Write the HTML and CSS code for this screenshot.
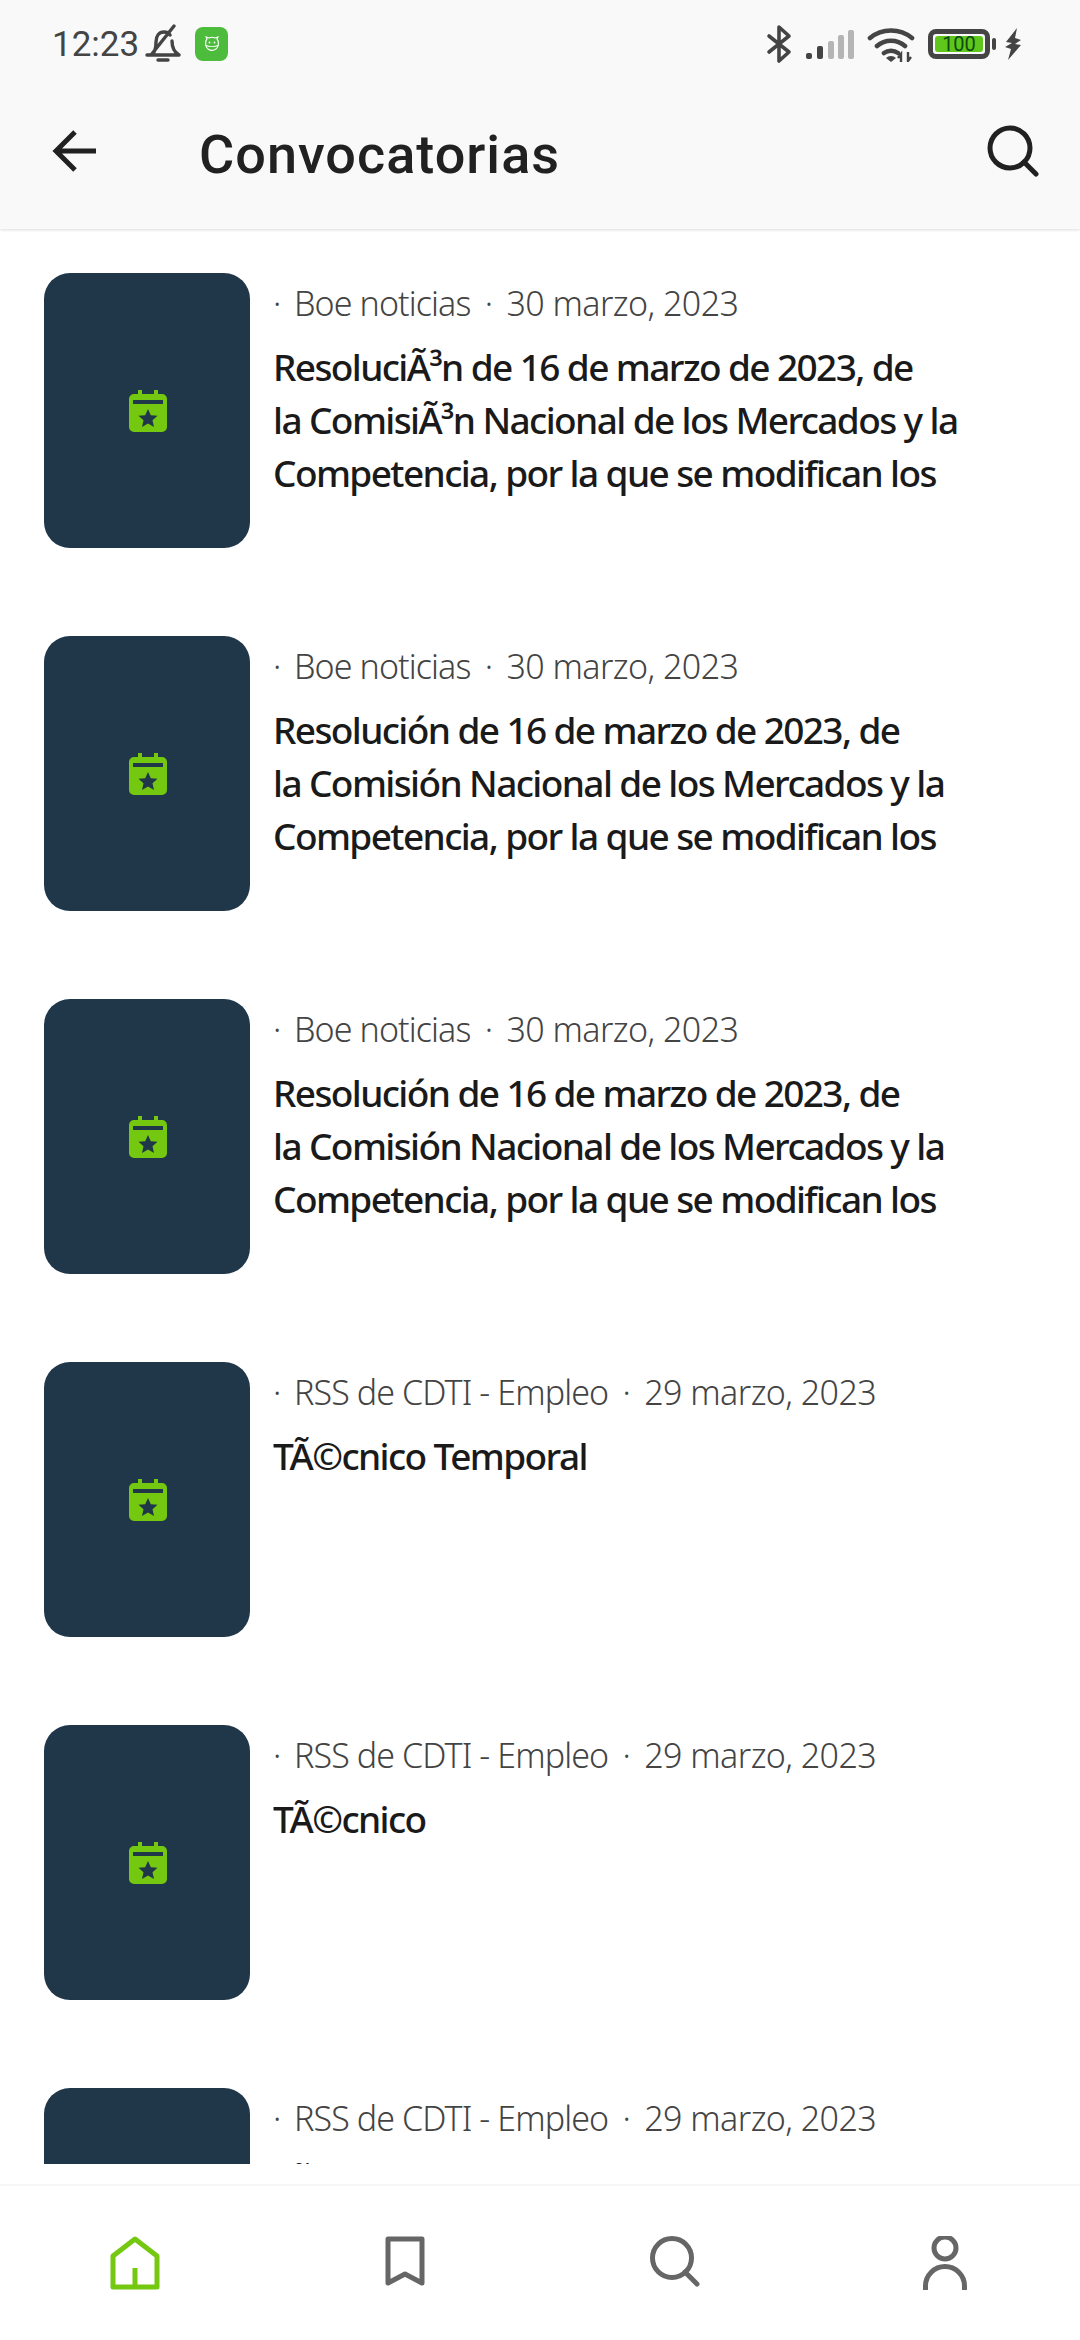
FILE: index.html
```html
<!DOCTYPE html>
<html lang="es">
<head>
<meta charset="utf-8">
<title>Convocatorias</title>
<link rel="stylesheet" href="styles.css">
</head>
<body>
<div class="app">
  <header class="top">
    <div class="status">
      <div class="status-left">
        <span class="time">12:23</span>
        <svg class="bell" viewBox="0 0 36 40" width="36" height="40"><path d="M2 31h32M7 31c3-3 4-7 4-13 0-6 3-10 8-10 3 0 5 1 6 3M27 17c0 6 2 11 7 14M13 36h10M6 31 29 2" fill="none" stroke="#444" stroke-width="3.4" stroke-linecap="round" stroke-linejoin="round"/></svg>
        <span class="appicon"><svg viewBox="0 0 20 20" width="20" height="20"><path d="M5 5 4 3l3 1a7 7 0 0 1 6 0l3-1-1 2c2 2 2 8-1 10a7 7 0 0 1-8 0C3 13 3 7 5 5zM3 11c4 2 10 2 14 0" fill="none" stroke="#fff" stroke-width="1.1"/><circle cx="7.5" cy="8.5" r=".9" fill="#fff"/><circle cx="12.5" cy="8.5" r=".9" fill="#fff"/></svg></span>
      </div>
      <div class="status-right">
        <svg viewBox="0 0 26 40" width="26" height="40"><path d="M3 12l20 16-10 9V3l10 9L3 28" fill="none" stroke="#444" stroke-width="3.6" stroke-linejoin="round" stroke-linecap="round"/></svg>
        <svg class="signal" viewBox="0 0 50 32" width="50" height="32"><g><rect x="2" y="25" width="6" height="6" rx="2" fill="#444"/><rect x="13" y="18" width="6" height="13" rx="2" fill="#444"/><rect x="24" y="13" width="6" height="18" rx="2" fill="#b5b5b5"/><rect x="34" y="7" width="6" height="24" rx="2" fill="#b5b5b5"/><rect x="44" y="2" width="6" height="29" rx="2" fill="#b5b5b5"/></g></svg>
        <svg class="wifi" viewBox="0 0 48 36" width="48" height="36"><g fill="none" stroke="#444" stroke-width="4.6" stroke-linecap="round"><path d="M3 12c12-10 30-10 42 0M10 20c8-7 20-7 28 0M17 27c4-3 10-3 14 0"/></g><path d="M24 36l-5-4a7 7 0 0 1 10 0z" fill="#444"/><path d="M34 36v-8l-3 4M41 26v9l3-4" fill="none" stroke="#444" stroke-width="2.4"/></svg>
        <span class="battery"><span class="battery-body"><span class="battery-fill">100</span></span><span class="battery-tip"></span></span>
        <svg class="bolt" viewBox="0 0 18 32" width="18" height="32"><path d="M13 0 2 14l6 1-7 4 6 2-3 11 13-15-6-1 6-4-6-2z" fill="#444"/></svg>
      </div>
    </div>
    <div class="bar">
      <svg class="back" viewBox="0 0 44 44" width="44" height="44"><path d="M44 22H4M23 3 4 22l19 19" fill="none" stroke="#212121" stroke-width="5"/></svg>
      <h1 class="title">Convocatorias</h1>
      <svg class="search" viewBox="0 0 52 52" width="52" height="52"><circle cx="23" cy="23" r="20" fill="none" stroke="#212121" stroke-width="5"/><path d="M37 37l12 12" stroke="#212121" stroke-width="5" stroke-linecap="round"/></svg>
    </div>
  </header>

  <main class="list">
    <article class="row">
      <div class="thumb"><svg class="cal"><use href="#cal"/></svg></div>
      <div class="body">
        <p class="meta"><span class="dot">·</span>Boe noticias<span class="dot mid">·</span><span class="date">30 marzo, 2023</span></p>
        <h2 class="head">ResoluciÃ³n de 16 de marzo de 2023, de<br>la ComisiÃ³n Nacional de los Mercados y la<br>Competencia, por la que se modifican los</h2>
      </div>
    </article>
    <article class="row">
      <div class="thumb"><svg class="cal"><use href="#cal"/></svg></div>
      <div class="body">
        <p class="meta"><span class="dot">·</span>Boe noticias<span class="dot mid">·</span><span class="date">30 marzo, 2023</span></p>
        <h2 class="head">Resolución de 16 de marzo de 2023, de<br>la Comisión Nacional de los Mercados y la<br>Competencia, por la que se modifican los</h2>
      </div>
    </article>
    <article class="row">
      <div class="thumb"><svg class="cal"><use href="#cal"/></svg></div>
      <div class="body">
        <p class="meta"><span class="dot">·</span>Boe noticias<span class="dot mid">·</span><span class="date">30 marzo, 2023</span></p>
        <h2 class="head">Resolución de 16 de marzo de 2023, de<br>la Comisión Nacional de los Mercados y la<br>Competencia, por la que se modifican los</h2>
      </div>
    </article>
    <article class="row">
      <div class="thumb"><svg class="cal"><use href="#cal"/></svg></div>
      <div class="body">
        <p class="meta"><span class="dot">·</span>RSS de CDTI - Empleo<span class="dot mid">·</span><span class="date">29 marzo, 2023</span></p>
        <h2 class="head">TÃ©cnico Temporal</h2>
      </div>
    </article>
    <article class="row">
      <div class="thumb"><svg class="cal"><use href="#cal"/></svg></div>
      <div class="body">
        <p class="meta"><span class="dot">·</span>RSS de CDTI - Empleo<span class="dot mid">·</span><span class="date">29 marzo, 2023</span></p>
        <h2 class="head">TÃ©cnico</h2>
      </div>
    </article>
    <article class="row">
      <div class="thumb"><svg class="cal"><use href="#cal"/></svg></div>
      <div class="body">
        <p class="meta"><span class="dot">·</span>RSS de CDTI - Empleo<span class="dot mid">·</span><span class="date">29 marzo, 2023</span></p>
        <h2 class="head">TÃ©cnico</h2>
      </div>
    </article>
  </main>

  <nav class="nav">
    <svg viewBox="0 0 50 54" width="50" height="54"><path d="M3 51V20L25 3l22 17v31zM25 51V32" fill="none" stroke="#74c80f" stroke-width="5" stroke-linejoin="round"/></svg>
    <svg viewBox="0 0 40 52" width="40" height="52"><path d="M3 3h34v44l-17-9-17 9z" fill="none" stroke="#666" stroke-width="5" stroke-linejoin="round"/></svg>
    <svg viewBox="0 0 50 52" width="50" height="52"><circle cx="22" cy="22" r="19.5" fill="none" stroke="#666" stroke-width="5"/><path d="M35 36l12 12" stroke="#666" stroke-width="5" stroke-linecap="round"/></svg>
    <svg viewBox="0 0 44 54" width="44" height="54"><circle cx="22" cy="12" r="11" fill="none" stroke="#666" stroke-width="5"/><path d="M2.500 54V50a19.500 19.500 0 0 1 39 0v4" fill="none" stroke="#666" stroke-width="5"/></svg>
  </nav>
</div>
<svg class="defs" width="0" height="0"><symbol id="cal" viewBox="0 0 38 42"><path d="M5 4h4V0h4v4h12V0h4v4h4a5 5 0 0 1 5 5v28a5 5 0 0 1-5 5H5a5 5 0 0 1-5-5V9a5 5 0 0 1 5-5z" fill="#74c80f"/><path d="M4 10h30v4H4z" fill="#203649"/><path d="m19 19 2.800 6.200 6.700.6-5 4.500 1.500 6.700-6-3.500-6 3.500 1.500-6.700-5-4.500 6.700-.6z" fill="#203649"/></symbol></svg>
</body>
</html>
```

FILE: styles.css
```css
* { box-sizing: border-box; }
html, body { margin: 0; padding: 0; background: #fff; }
.app { width: 1080px; height: 2340px; display: flex; flex-direction: column; overflow: hidden; }
.top { height: 229px; flex: none; background: #f9f9f9; box-shadow: 0 1px 3px rgba(0,0,0,.14); position: relative; z-index: 1; }
.status { height: 88px; padding: 0 58px 0 52px; display: flex; justify-content: space-between; align-items: center; }
.status-left, .status-right { display: flex; align-items: center; }
.time { font: 400 35px Roboto, sans-serif; color: #444; }
.bell { margin-left: 6px; }
.appicon { width: 33px; height: 34px; margin-left: 14px; border-radius: 8px; background: #4dbb3c; display: flex; align-items: center; justify-content: center; }
.signal { margin-left: 12px; }
.wifi { margin-left: 13px; }
.battery { display: flex; align-items: center; margin-left: 13px; }
.battery-body { width: 62px; height: 30px; border: 5px solid #444; border-radius: 8px; padding: 2px; display: flex; }
.battery-fill { flex: 1; background: #5fc61c; border-radius: 3px; color: #0d4a10; font: 400 20px/16px Roboto, sans-serif; text-align: center; }
.battery-tip { width: 4px; height: 12px; margin-left: 2px; background: #444; border-radius: 2px; }
.bolt { margin-left: 8px; }
.bar { height: 141px; padding: 0 41px 16px 52px; display: flex; align-items: center; }
.title { margin: 8px 0 0 103px; flex: 1; font: 500 54px Roboto, sans-serif; letter-spacing: 1px; color: #212121; }
.list { height: 1935px; flex: none; padding-top: 44px; overflow: hidden; }
.row { display: flex; gap: 23px; padding-left: 44px; height: 275px; margin-bottom: 88px; }
.thumb { width: 206px; height: 275px; flex: none; background: #203649; border-radius: 26px; display: flex; align-items: center; justify-content: center; }
.cal { width: 38px; height: 42px; margin-left: 2px; }
.body { flex: 1; min-width: 0; }
.meta { margin: 8px 0 0; font: 300 34px/44px "Noto Sans", sans-serif; letter-spacing: -.9px; color: #444; white-space: nowrap; }
.date { letter-spacing: -.55px; }
.dot { display: inline-block; width: 21px; }
.dot.mid { width: 36px; text-align: center; }
.head { margin: 15px 0 0; font: 500 37px/53px "Noto Sans", sans-serif; letter-spacing: -1.6px; color: #1a1a1a; white-space: nowrap; }
.nav { flex: 1; margin-top: 20px; border-top: 2px solid #f6f6f6; display: grid; grid-template-columns: repeat(4, 270px); justify-items: center; align-items: start; padding-top: 50px; background: #fff; }
.defs { position: absolute; }
```
